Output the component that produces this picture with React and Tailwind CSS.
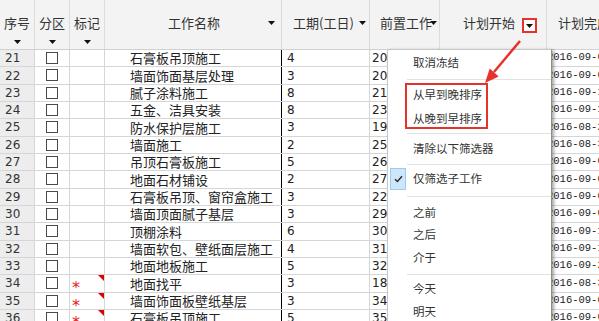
import React from "react";

const rows = [
  { n: 21, name: "石膏板吊顶施工", d: 4, p: 20, date: "2016-09-05" },
  { n: 22, name: "墙面饰面基层处理", d: 3, p: 20, date: "2016-09-05" },
  { n: 23, name: "腻子涂料施工", d: 8, p: 21, date: "2016-09-13" },
  { n: 24, name: "五金、洁具安装", d: 8, p: 23, date: "2016-09-13" },
  { n: 25, name: "防水保护层施工", d: 3, p: 19, date: "2016-08-29" },
  { n: 26, name: "墙面施工", d: 2, p: 25, date: "2016-08-31" },
  { n: 27, name: "吊顶石膏板施工", d: 5, p: 26, date: "2016-09-05" },
  { n: 28, name: "地面石材铺设", d: 2, p: 27, date: "2016-09-07" },
  { n: 29, name: "石膏板吊顶、窗帘盒施工", d: 3, p: 22, date: "2016-09-08" },
  { n: 30, name: "墙面顶面腻子基层", d: 3, p: 29, date: "2016-09-09" },
  { n: 31, name: "顶棚涂料", d: 6, p: 30, date: "2016-09-15" },
  { n: 32, name: "墙面软包、壁纸面层施工", d: 4, p: 31, date: "2016-09-19" },
  { n: 33, name: "地面地板施工", d: 5, p: 32, date: "2016-09-24" },
  { n: 34, name: "地面找平", d: 3, p: 18, date: "2016-08-31", star: true },
  { n: 35, name: "墙面饰面板壁纸基层", d: 3, p: 34, date: "2016-09-03", star: true },
  { n: 36, name: "石膏板吊顶施工", d: 5, p: 35, date: "2016-09-08", star: true },
];

const cjk = "font-['Noto_Sans_CJK_SC','Noto_Sans',sans-serif]";
const num = "font-['DejaVu_Sans',sans-serif]";

function Tri() {
  return (
    <svg width="7" height="4" viewBox="0 0 7 4" className="shrink-0">
      <polygon points="0,0 7,0 3.5,4" fill="#111" />
    </svg>
  );
}

const menu = [
  { label: "取消冻结", h: "h-[26px]" },
  { sep: "h-[6px]" },
  { label: "从早到晚排序", h: "h-[25px]" },
  { label: "从晚到早排序", h: "h-[24px]" },
  { sep: "h-[5px]" },
  { label: "清除以下筛选器", h: "h-[26px]" },
  { sep: "h-[5px]" },
  { label: "仅筛选子工作", h: "h-[24px]", checked: true },
  { sep: "h-[10px]" },
  { label: "之前", h: "h-[23px]" },
  { label: "之后", h: "h-[21px]" },
  { label: "介于", h: "h-[25px]" },
  { sep: "h-[8px]" },
  { label: "今天", h: "h-[22px]" },
  { label: "明天", h: "h-[24px]" },
];

export default function App() {
  return (
    <div className="relative w-[599px] h-[321px] overflow-hidden bg-white text-[#222]">
      {/* header */}
      <div className={`flex h-[50px] bg-[#f3f3f3] border-b border-[#d0d0d0] text-[13px] text-[#333] ${cjk}`}>
        {["序号", "分区", "标记"].map((t) => (
          <div key={t} className="w-[35px] shrink-0 border-r border-[#dcdcdc] flex flex-col items-center pt-[14px]">
            <span className="leading-[18px]">{t}</span>
            <div className="mt-[8px]">
              <Tri />
            </div>
          </div>
        ))}
        <div className="w-[177px] shrink-0 border-r border-[#dcdcdc] flex items-center pb-[3px] pl-[63px] pr-[6px]">
          <span>工作名称</span>
          <div className="ml-auto">
            <Tri />
          </div>
        </div>
        <div className="w-[88px] shrink-0 border-r border-[#dcdcdc] flex items-center pb-[3px] pl-[11px]">
          <span>工期(工日)</span>
          <div className="ml-[5px]">
            <Tri />
          </div>
        </div>
        <div className="w-[70px] shrink-0 border-r border-[#dcdcdc] flex items-center pb-[3px] pl-[10px]">
          <span className="whitespace-nowrap">前置工作</span>
          <div className="-ml-[2px]">
            <Tri />
          </div>
        </div>
        <div className="w-[107px] shrink-0 border-r border-[#dcdcdc] flex items-center pb-[3px] pl-[23px]">
          <span>计划开始</span>
          <div className="ml-[7px] mt-[5px] w-[15px] h-[15px] border-2 border-[#e5322d] bg-white flex items-center justify-center">
            <Tri />
          </div>
        </div>
        <div className="flex-1 flex items-center pb-[3px] pl-[11px] whitespace-nowrap">
          <span>计划完成</span>
        </div>
      </div>

      {/* rows */}
      {rows.map((r) => (
        <div key={r.n} className="flex h-[17.33px] border-b border-[#d6d6d6]">
          <div className={`w-[35px] shrink-0 bg-[#ededed] border-r border-[#d6d6d6] pl-[5px] flex items-center text-[12px] text-[#333] ${num}`}>
            {r.n}
          </div>
          <div className="w-[35px] shrink-0 border-r border-[#d6d6d6] flex items-center justify-center">
            <div className="w-[12px] h-[12px] border border-[#4a4a4a] bg-white" />
          </div>
          <div className="w-[35px] shrink-0 border-r border-[#d6d6d6] relative overflow-hidden">
            {r.star && (
              <>
                <span className={`block pl-[2px] pt-[5px] leading-none text-[16px] text-[#e52020] ${num}`}>*</span>
                <span className="absolute right-0 top-0 w-0 h-0 border-l-[6px] border-l-transparent border-t-[6px] border-t-[#e00000]" />
              </>
            )}
          </div>
          <div className={`w-[177px] shrink-0 border-r border-black pl-[25px] flex items-center text-[13px] whitespace-nowrap ${cjk}`}>
            {r.name}
          </div>
          <div className={`w-[88px] shrink-0 border-r border-[#d6d6d6] pl-[5px] flex items-center text-[12px] ${num}`}>
            {r.d}
          </div>
          <div className={`w-[70px] shrink-0 border-r border-[#d6d6d6] pl-[2px] flex items-center text-[12px] ${num}`}>
            {r.p}
          </div>
          <div className="w-[107px] shrink-0 border-r border-[#d6d6d6]" />
          <div className="flex-1 flex items-center text-[10.5px] font-['Liberation_Mono',monospace] whitespace-nowrap overflow-hidden">
            {r.date}
          </div>
        </div>
      ))}

      {/* dropdown menu */}
      <div className={`absolute left-[387px] top-[49px] w-[165px] h-[290px] bg-white border border-[#c6c6c6] border-r-[#8c8c8c] shadow-[2px_1px_3px_rgba(0,0,0,0.35)] text-[11.5px] text-[#333] ${cjk}`}>
        {menu.map((m, i) =>
          m.sep ? (
            <div key={i} className={`${m.sep} flex items-center pl-[19px]`}>
              <div className="h-px w-full bg-[#e2e2e2]" />
            </div>
          ) : (
            <div key={i} className={`${m.h} flex items-center`}>
              <div className="w-[25px] h-full flex items-center">
                {m.checked && (
                  <div className="ml-[2px] w-[16px] h-[22px] bg-[#cde6fa] border border-[#9ccbf0] flex items-center justify-center">
                    <svg width="9" height="8" viewBox="0 0 9 8">
                      <path d="M1 4.2 L3.4 6.5 L8 1.2" stroke="#2a2a2a" strokeWidth="1.4" fill="none" />
                    </svg>
                  </div>
                )}
              </div>
              <span className="whitespace-nowrap">{m.label}</span>
            </div>
          )
        )}
      </div>

      {/* annotation box */}
      <div className="absolute left-[405px] top-[83px] w-[83px] h-[46px] border-2 border-[#e5322d]" />

      {/* annotation arrow */}
      <svg className="absolute left-0 top-0 pointer-events-none" width="599" height="321" viewBox="0 0 599 321">
        <line x1="520" y1="41" x2="494" y2="72" stroke="#e5322d" strokeWidth="2.5" />
        <polygon points="485,83 498.7,76.5 489.7,68.5" fill="#e5322d" />
      </svg>
    </div>
  );
}
